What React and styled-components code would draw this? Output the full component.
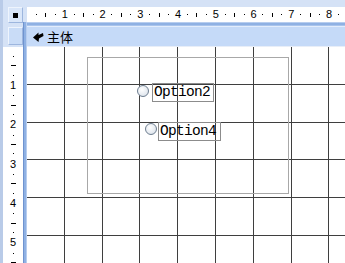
import React from "react";
import styled, { createGlobalStyle } from "styled-components";

const CM = 37.8;

const Global = createGlobalStyle`
  html, body {
    margin: 0;
    padding: 0;
    background: #fff;
  }
`;

const Page = styled.div`
  width: 345px;
  height: 263px;
  overflow: hidden;
  display: grid;
  grid-template-columns: 20px 4px 1fr;
  grid-template-rows: 22px 4px 20px 1px 1fr;
  background: #d5e2f6;
  border-left: 3px solid #b9cbe8;
  box-sizing: border-box;
  font-family: "Liberation Sans", Arial, sans-serif;
`;

const Corner = styled.div`
  grid-row: 1 / 3;
  grid-column: 1;
  padding: 7px 0 0 5px;
`;

const CornerBox = styled.div`
  width: 15px;
  height: 16px;
  box-sizing: border-box;
  border: 1px solid #9db6de;
  border-top-color: #eef4fd;
  border-left-color: #eef4fd;
  background: #d9e6f9;
  display: flex;
  align-items: center;
  justify-content: center;

  &::after {
    content: "";
    width: 5px;
    height: 5px;
    background: #000;
  }
`;

const TopRulerCell = styled.div`
  grid-row: 1;
  grid-column: 3;
  padding-top: 7px;
  overflow: hidden;
`;

const Ruler = styled.div`
  display: flex;
  flex-direction: ${p => (p.$vertical ? "column" : "row")};
  background: #fff;
  ${p =>
    p.$vertical
      ? `padding-top: ${CM / 8}px; height: 100%;`
      : `padding-left: ${CM / 8}px; height: 15px;`}
  box-sizing: border-box;
  overflow: hidden;
`;

const Slot = styled.div`
  flex: 0 0 ${CM / 4}px;
  display: flex;
  align-items: center;
  justify-content: center;
  font-size: 11px;
  line-height: 1;
  color: #000;
`;

const Dot = styled.span`
  width: 1px;
  height: 1px;
  background: #000;
`;

const Tick = styled.span`
  width: ${p => (p.$vertical ? "5px" : "1px")};
  height: ${p => (p.$vertical ? "1px" : "4px")};
  background: #000;
`;

const HStripe = styled.div`
  grid-row: 2;
  grid-column: 2 / 4;
  background: #8fb1e3;
  border-top: 1px solid #b7cdef;
  border-bottom: 1px solid #a9c4ec;
`;

const VStripe = styled.div`
  grid-row: 2 / 6;
  grid-column: 2;
  background: #8fb1e3;
  border-left: 1px solid #6f93cf;
  border-right: 1px solid #b7cdef;
`;

const Selector = styled.div`
  grid-row: 3;
  grid-column: 1;
  padding: 1px 0 1px 5px;
  display: flex;

  &::after {
    content: "";
    flex: 1;
    border: 1px solid #9db6de;
    border-top-color: #eef4fd;
    border-left-color: #eef4fd;
    background: #c9dcf7;
  }
`;

const SectionBar = styled.div`
  grid-row: 3;
  grid-column: 3;
  background: #c5daf8;
  border-top: 1px solid #e3edfc;
  display: flex;
  align-items: center;
  gap: 3px;
  padding-left: 6px;
  font-family: "Noto Sans CJK SC", "Liberation Sans", sans-serif;
  font-size: 13px;
  color: #000;
`;

const BarLine = styled.div`
  grid-row: 4;
  grid-column: 3;
  background: #e8eef8;
`;

const LeftRulerCell = styled.div`
  grid-row: 5;
  grid-column: 1;
  overflow: hidden;
`;

const Canvas = styled.div`
  grid-row: 5;
  grid-column: 3;
  position: relative;
  background: #fff;
  overflow: hidden;
`;

const GridLayer = styled.svg`
  position: absolute;
  inset: 0;
`;

const Frame = styled.div`
  position: absolute;
  left: 60px;
  top: 10px;
  width: 202px;
  height: 137px;
  box-sizing: border-box;
  border: 1px solid #a8a8a8;
`;

const Radio = styled.div`
  position: absolute;
  left: ${p => p.$x}px;
  top: ${p => p.$y}px;
  width: 12px;
  height: 12px;
  box-sizing: border-box;
  border-radius: 50%;
  border: 1px solid #6d7d8f;
  background: radial-gradient(circle at 40% 35%, #ffffff 0%, #e6ebf1 60%, #cfd7e2 100%);
`;

const Label = styled.div`
  position: absolute;
  left: ${p => p.$x}px;
  top: ${p => p.$y}px;
  width: ${p => p.$w}px;
  height: 19px;
  box-sizing: border-box;
  border: 1px solid #8c8c8c;
  padding-left: 1px;
  font-family: "Liberation Mono", "Courier New", monospace;
  font-size: 14.5px;
  letter-spacing: -0.7px;
  line-height: 17px;
  color: #000;
  white-space: nowrap;
`;

function RulerMarks({ vertical, count }) {
  return Array.from({ length: count }, (_, i) => {
    const k = i + 1;
    let mark;
    if (k % 4 === 0) mark = k / 4;
    else if (k % 2 === 0) mark = <Tick $vertical={vertical} />;
    else mark = <Dot />;
    return <Slot key={k}>{mark}</Slot>;
  });
}

function SectionIcon() {
  return (
    <svg width="11" height="10" viewBox="0 0 11 10">
      <polygon points="0,5.5 5.5,0.5 5.5,3 10,1 10.5,4 6,6.5 5.5,10" fill="#000" />
    </svg>
  );
}

const options = [
  { rx: 110, ry: 38, lx: 125, ly: 36, w: 62, text: "Option2" },
  { rx: 118, ry: 76, lx: 131, ly: 75, w: 63, text: "Option4" },
];

export default function App() {
  const lines = Array.from({ length: 9 }, (_, i) => Math.round((i + 1) * CM) - 0.5);

  return (
    <>
      <Global />
      <Page>
        <Corner>
          <CornerBox />
        </Corner>
        <TopRulerCell>
          <Ruler>
            <RulerMarks count={34} />
          </Ruler>
        </TopRulerCell>
        <HStripe />
        <VStripe />
        <Selector />
        <SectionBar>
          <SectionIcon />
          <span>主体</span>
        </SectionBar>
        <BarLine />
        <LeftRulerCell>
          <Ruler $vertical>
            <RulerMarks vertical count={22} />
          </Ruler>
        </LeftRulerCell>
        <Canvas>
          <GridLayer width="318" height="216">
            {lines.map(x => (
              <line key={"v" + x} x1={x} y1="0" x2={x} y2="216" stroke="#3f3f3f" strokeWidth="1" />
            ))}
            {lines.map(y => (
              <line key={"h" + y} x1="0" y1={y} x2="318" y2={y} stroke="#3f3f3f" strokeWidth="1" />
            ))}
          </GridLayer>
          <Frame />
          {options.map(o => (
            <React.Fragment key={o.text}>
              <Radio $x={o.rx} $y={o.ry} />
              <Label $x={o.lx} $y={o.ly} $w={o.w}>
                {o.text}
              </Label>
            </React.Fragment>
          ))}
        </Canvas>
      </Page>
    </>
  );
}
